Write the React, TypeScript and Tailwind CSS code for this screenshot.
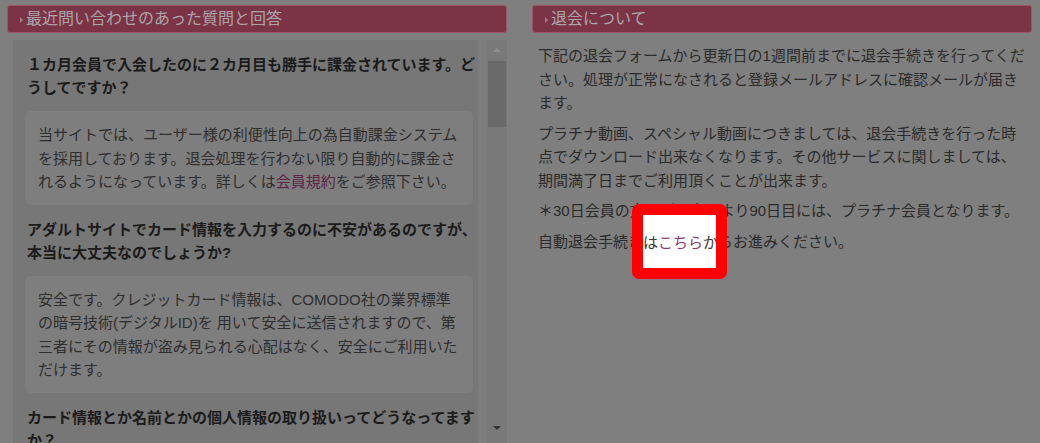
const questions = [
  {
    q: '１カ月会員で入会したのに２カ月目も勝手に課金されています。どうしてですか？',
    a: (
      <>
        当サイトでは、ユーザー様の利便性向上の為自動課金システムを採用しております。退会処理を行わない限り自動的に課金されるようになっています。詳しくは
        <span className="text-[#5c2446]">会員規約</span>
        をご参照下さい。
      </>
    ),
  },
  {
    q: 'アダルトサイトでカード情報を入力するのに不安があるのですが、本当に大丈夫なのでしょうか?',
    a: (
      <>
        安全です。クレジットカード情報は、COMODO社の業界標準の暗号技術(デジタルID)を 用いて安全に送信されますので、第三者にその情報が盗み見られる心配はなく、安全にご利用いただけます。
      </>
    ),
  },
  {
    q: 'カード情報とか名前とかの個人情報の取り扱いってどうなってますか？',
    a: <>お客様の個人情報は厳重に管理しております。</>,
  },
];

function SectionHeader({ title }: { title: string }) {
  return (
    <div className="flex h-[28px] items-center rounded-[3px] border border-[#9c5468] bg-[#7b3446] pl-[12px]">
      <svg width="3" height="6" viewBox="0 0 3 6" className="mt-[2px] shrink-0">
        <path d="M0 0 L3 3 L0 6 Z" fill="#a87888" />
      </svg>
      <span className="ml-[3px] text-[16px] leading-none text-[#aca5a9]">{title}</span>
    </div>
  );
}

export default function App() {
  return (
    <div className="relative h-[443px] w-[1040px] overflow-hidden bg-[#7f7f7f] font-['Liberation_Sans','Noto_Sans_CJK_JP',sans-serif] text-[15px] [text-spacing-trim:space-all]">
      <div className="flex gap-[25px] px-[7px] pt-[5px]">
        {/* FAQ */}
        <div className="w-[500px] shrink-0">
          <SectionHeader title="最近問い合わせのあった質問と回答" />
          <div className="ml-[6px] mt-[7px] flex h-[403px]">
            <div className="h-full w-[465px] shrink-0 overflow-hidden bg-[#777777] pl-[14px] pt-[13px]">
              {questions.map((item, i) => (
                <div key={i} className={i === 0 ? '' : 'mt-[13px]'}>
                  <p className="text-[15px] font-bold leading-[23px] text-[#1b1b1b]">{item.q}</p>
                  <div className="ml-[-2px] mt-[12px] w-[448px] rounded-[5px] bg-[#7e7e7e] pb-[11px] pl-[13px] pr-[10px] pt-[12px] leading-[23.5px] text-[#2e2e2e]">
                    {item.a}
                  </div>
                </div>
              ))}
            </div>
            <div className="w-[9px] shrink-0 bg-[#7d7d7d]" />
            <div className="flex h-full w-[20px] shrink-0 flex-col items-center bg-[#797979] pb-[5px]">
              <div className="flex h-[20px] w-full items-center justify-center">
                <svg width="8" height="4" viewBox="0 0 8 4">
                  <path d="M0 4 L4 0 L8 4 Z" fill="#8e8e8e" />
                </svg>
              </div>
              <div className="w-full flex-1 px-[1px] pt-[1px]">
                <div className="h-[66px] w-full bg-[#696969]" />
              </div>
              <div className="flex h-[20px] w-full items-center justify-center">
                <svg width="8" height="4" viewBox="0 0 8 4">
                  <path d="M0 0 L4 4 L8 0 Z" fill="#333333" />
                </svg>
              </div>
            </div>
          </div>
        </div>

        {/* 退会 */}
        <div className="w-[500px] shrink-0">
          <SectionHeader title="退会について" />
          <div className="mt-[11px] pl-[6px] pr-[4px] leading-[23.5px] text-[#2b2b2b]">
            <p className="mb-[7px]">
              下記の退会フォームから更新日の1週間前までに退会手続きを行ってください。処理が正常になされると登録メールアドレスに確認メールが届きます。
            </p>
            <p className="mb-[7px]">
              プラチナ動画、スペシャル動画につきましては、退会手続きを行った時点でダウンロード出来なくなります。その他サービスに関しましては、期間満了日までご利用頂くことが出来ます。
            </p>
            <p className="mb-[7px]">＊30日会員の方はご入会日より90日目には、プラチナ会員となります。</p>
            <p>
              自動退会手続きは<span className="text-[#5c2446]">こちら</span>からお進みください。
            </p>
          </div>
        </div>
      </div>

      {/* highlight */}
      <div className="absolute left-[632px] top-[204px] h-[75px] w-[95px] overflow-hidden rounded-[7px] border-[11px] border-[#ff0000] bg-white">
        <div className="whitespace-nowrap pt-[16px] leading-[23.5px] text-[#3a3a3a]">
          は<span className="text-[#8c3a70]">こちら</span>か
        </div>
      </div>
    </div>
  );
}
